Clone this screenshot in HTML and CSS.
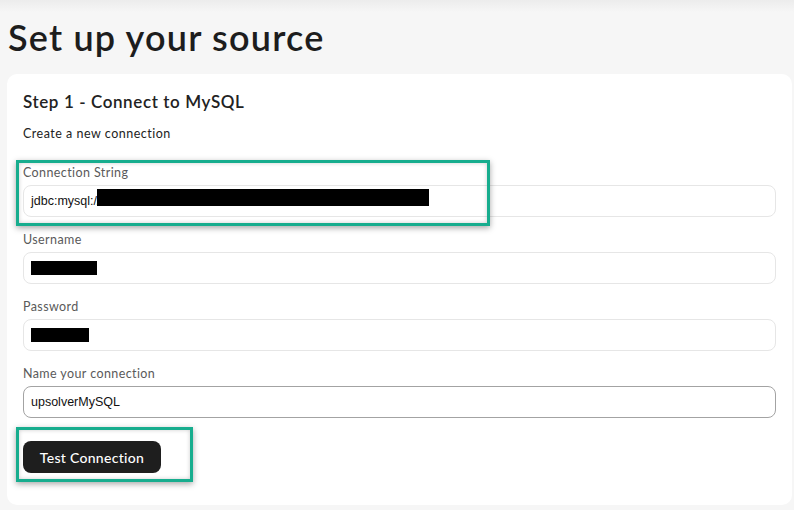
FILE: index.html
```html
<!DOCTYPE html>
<html>
<head>
<meta charset="utf-8">
<link rel="stylesheet" href="styles.css">
</head>
<body>
<div class="page">
  <h1 class="title">Set up your source</h1>
  <div class="card">
    <h2 class="step">Step 1 - Connect to MySQL</h2>
    <p class="sub">Create a new connection</p>
    <div class="fields">
      <div class="field">
        <label class="label">Connection String</label>
        <div class="input"><span class="val">jdbc:mysql://</span><span class="redact r1"></span></div>
      </div>
      <div class="field">
        <label class="label">Username</label>
        <div class="input"><span class="redact r2"></span></div>
      </div>
      <div class="field">
        <label class="label">Password</label>
        <div class="input"><span class="redact r3"></span></div>
      </div>
      <div class="field">
        <label class="label">Name your connection</label>
        <div class="input focus"><span class="val">upsolverMySQL</span></div>
      </div>
    </div>
    <button class="btn">Test Connection</button>
  </div>
  <div class="hl hl1"></div>
  <div class="hl hl2"></div>
</div>
</body>
</html>
```
FILE: styles.css
```css
html, body {
  margin: 0;
  padding: 0;
}
body {
  background: #f6f6f6;
  font-family: "Lato", "Noto Sans", sans-serif;
  color: #1f1f1f;
  width: 794px;
  height: 510px;
  overflow: hidden;
}
.page {
  position: relative;
  background: linear-gradient(#ececec 0, #f6f6f6 12px);
  height: 510px;
  padding: 14px 2px 0 7px;
  box-sizing: border-box;
}
.title {
  margin: 0 0 0 1px;
  font-size: 36px;
  line-height: 46px;
  font-weight: 600;
  color: #1d1d1d;
  letter-spacing: 1.2px;
}
.card {
  margin-top: 14px;
  background: #fff;
  border-radius: 10px;
  padding: 18px 16px 30px 16px;
  height: 431px;
  box-sizing: border-box;
}
.step {
  margin: 0;
  font-size: 17px;
  line-height: 20px;
  font-weight: 600;
  color: #222;
  letter-spacing: 0.6px;
}
.sub {
  margin: 14px 0 0 0;
  font-size: 12.5px;
  line-height: 16px;
  color: #222;
  letter-spacing: 0.5px;
}
.fields {
  margin-top: 23px;
  display: flex;
  flex-direction: column;
  gap: 15px;
}
.field {
  display: flex;
  flex-direction: column;
  gap: 4px;
}
.label {
  font-size: 12.5px;
  line-height: 16px;
  color: #5a5a5a;
  letter-spacing: 0.4px;
}
.input {
  height: 32px;
  box-sizing: border-box;
  border: 1px solid #e6e6e6;
  border-radius: 8px;
  display: flex;
  align-items: center;
  padding-left: 7px;
  font-family: "Liberation Sans", Arial, sans-serif;
  font-size: 12.5px;
  color: #111;
}
.input.focus {
  border-color: #a3a3a3;
}
.redact {
  display: inline-block;
  background: #000;
}
.r1 { width: 332px; height: 17px; margin-top: -7px; margin-left: -3px; }
.r2 { width: 66px; height: 14px; }
.r3 { width: 58px; height: 14px; }
.btn {
  margin-top: 23px;
  background: #1e1e1e;
  color: #fff;
  border: none;
  border-radius: 8px;
  width: 138px;
  height: 32px;
  font-family: "Lato", "Noto Sans", sans-serif;
  font-size: 14px;
  font-weight: 500;
  letter-spacing: 0.3px;
  padding: 0;
}
.hl {
  position: absolute;
  border: 3px solid #17ad8e;
  box-sizing: border-box;
  box-shadow: 0 2px 6px rgba(0, 0, 0, 0.35), inset 0 0 4px rgba(0, 0, 0, 0.2);
}
.hl1 { left: 16px; top: 160px; width: 474px; height: 66px; }
.hl2 { left: 16px; top: 427px; width: 177px; height: 55px; }
```
